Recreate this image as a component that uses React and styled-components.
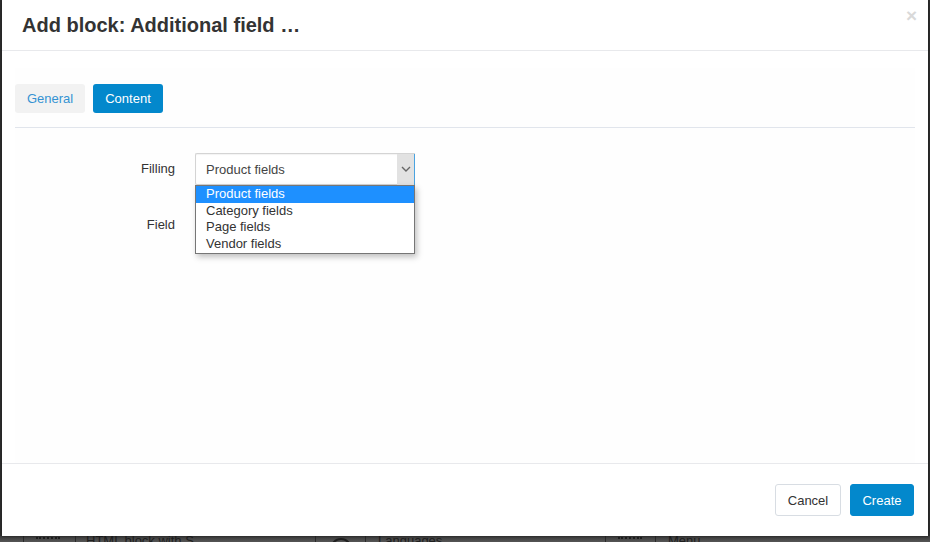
import React from "react";
import styled, { createGlobalStyle } from "styled-components";

const Global = createGlobalStyle`
  html, body { margin: 0; padding: 0; }
  body {
    background: #2f2f2f;
    font-family: "Liberation Sans", Arial, sans-serif;
    width: 930px;
    height: 542px;
    overflow: hidden;
  }
  * { box-sizing: border-box; }
`;

const Page = styled.div`
  display: flex;
  flex-direction: column;
  width: 930px;
  height: 542px;
`;

const Modal = styled.div`
  margin: 0 2px;
  height: 536px;
  background: #fff;
  display: flex;
  flex-direction: column;
  position: relative;
  box-shadow: 0 0 3px rgba(0,0,0,0.5);
`;

const Header = styled.div`
  height: 51px;
  border-bottom: 1px solid #e8e9ec;
  padding: 13px 20px 0 20px;
  display: flex;
  align-items: flex-start;
  justify-content: space-between;
`;

const Title = styled.h3`
  margin: 0;
  font-size: 20px;
  font-weight: bold;
  color: #333;
  line-height: 24px;
`;

const Close = styled.span`
  font-size: 19px;
  font-weight: bold;
  color: #d9d9d9;
  line-height: 14px;
  margin-top: -4px;
  margin-right: -9px;
`;

const Body = styled.div`
  flex: 1;
  padding: 17px 13px 0 13px;
  background: #fff;
`;

const Panel = styled.div`
  background: #fefefe;
  height: 100%;
  padding: 16px 0 0 0;
`;

const Tabs = styled.div`
  display: flex;
  gap: 8px;
  padding: 0 0 14px 0;
  border-bottom: 1px solid #e1e5ec;
`;

const Tab = styled.button`
  width: 70px;
  height: 29px;
  border: none;
  border-radius: 3px;
  font-family: inherit;
  font-size: 13px;
  background: ${p => (p.$active ? "#0388cc" : "#f2f2f2")};
  color: ${p => (p.$active ? "#fff" : "#3592d2")};
  padding: 0;
`;

const Form = styled.div`
  display: flex;
  flex-direction: column;
  gap: 24px;
  padding-top: 25px;
`;

const Row = styled.div`
  display: flex;
  align-items: center;
  height: 32px;
`;

const Label = styled.label`
  width: 160px;
  text-align: right;
  font-size: 13px;
  color: #333;
  margin-right: 20px;
  margin-top: ${p => p.$offset || 0}px;
`;

const SelectWrap = styled.div`
  position: relative;
  width: 220px;
  height: 32px;
`;

const SelectBox = styled.div`
  width: 220px;
  height: 32px;
  border: 1px solid #d4d4d4;
  border-right: none;
  border-radius: 2px 0 0 2px;
  background: #fff;
  display: flex;
  align-items: center;
  justify-content: space-between;
  font-size: 13px;
  color: #444;
  padding-left: 10px;
  box-shadow: inset 0 1px 1px rgba(0,0,0,0.05);
`;

const Arrow = styled.div`
  width: 18px;
  height: 31px;
  background: #e2e2e2;
  display: flex;
  align-items: center;
  justify-content: center;
  border-right: 1px solid #4aa3e0;
`;

const Dropdown = styled.ul`
  position: absolute;
  left: 0;
  top: 32px;
  width: 220px;
  margin: 0;
  padding: 0 0 1px 0;
  list-style: none;
  background: #fff;
  border: 1px solid #767676;
  box-shadow: 2px 3px 6px rgba(0,0,0,0.25);
  z-index: 5;
`;

const Option = styled.li`
  font-size: 13px;
  height: 16.5px;
  line-height: 16px;
  padding-left: 10px;
  color: ${p => (p.$selected ? "#fff" : "#333")};
  background: ${p => (p.$selected ? "#1e90ff" : "transparent")};
`;

const Footer = styled.div`
  height: 73px;
  border-top: 1px solid #e8e9ec;
  display: flex;
  justify-content: flex-end;
  align-items: flex-start;
  gap: 9px;
  padding: 20px 14px 0 0;
`;

const Button = styled.button`
  height: 32px;
  width: ${p => (p.$primary ? 64 : 66)}px;
  padding: 0;
  font-family: inherit;
  font-size: 13px;
  border-radius: 3px;
  border: 1px solid ${p => (p.$primary ? "#0388cc" : "#d8dde3")};
  background: ${p => (p.$primary ? "#0388cc" : "#fff")};
  color: ${p => (p.$primary ? "#fff" : "#333")};
`;

const Backdrop = styled.div`
  flex: 1;
  display: flex;
  background: linear-gradient(#3a3a3a, #555);
  overflow: hidden;
  padding-left: 23px;
`;

const Cell = styled.div`
  width: ${p => p.$w}px;
  border-left: 1px solid #2a2a2a;
  font-size: 13px;
  color: #1f1f1f;
  padding-left: ${p => p.$pad || 10}px;
  line-height: 10px;
  white-space: nowrap;
  overflow: hidden;
`;

const Dots = styled.div`
  width: 24px;
  margin-top: 1px;
  border-top: 2px dotted #1f1f1f;
`;

const Circle = styled.div`
  width: 22px;
  height: 22px;
  border: 2px solid #1f1f1f;
  border-radius: 50%;
  margin-top: 2px;
`;

export default function App() {
  return (
    <Page>
      <Global />
      <Modal>
        <Header>
          <Title>Add block: Additional field …</Title>
          <Close>×</Close>
        </Header>
        <Body>
          <Panel>
            <Tabs>
              <Tab>General</Tab>
              <Tab $active>Content</Tab>
            </Tabs>
            <Form>
              <Row>
                <Label $offset={-2}>Filling</Label>
                <SelectWrap>
                  <SelectBox>
                    Product fields
                    <Arrow>
                      <svg width="10" height="6" viewBox="0 0 10 6">
                        <path d="M1 1 L5 5 L9 1" fill="none" stroke="#666" strokeWidth="1.4" />
                      </svg>
                    </Arrow>
                  </SelectBox>
                  <Dropdown>
                    <Option $selected>Product fields</Option>
                    <Option>Category fields</Option>
                    <Option>Page fields</Option>
                    <Option>Vendor fields</Option>
                  </Dropdown>
                </SelectWrap>
              </Row>
              <Row>
                <Label $offset={-2}>Field</Label>
              </Row>
            </Form>
          </Panel>
        </Body>
        <Footer>
          <Button>Cancel</Button>
          <Button $primary>Create</Button>
        </Footer>
      </Modal>
      <Backdrop>
        <Cell $w={52} $pad={12}><Dots /></Cell>
        <Cell $w={240} $pad={10}>HTML block with S</Cell>
        <Cell $w={50} $pad={14}><Circle /></Cell>
        <Cell $w={240} $pad={12}>Languages</Cell>
        <Cell $w={50} $pad={12}><Dots /></Cell>
        <Cell $w={260} $pad={12}>Menu</Cell>
      </Backdrop>
    </Page>
  );
}
